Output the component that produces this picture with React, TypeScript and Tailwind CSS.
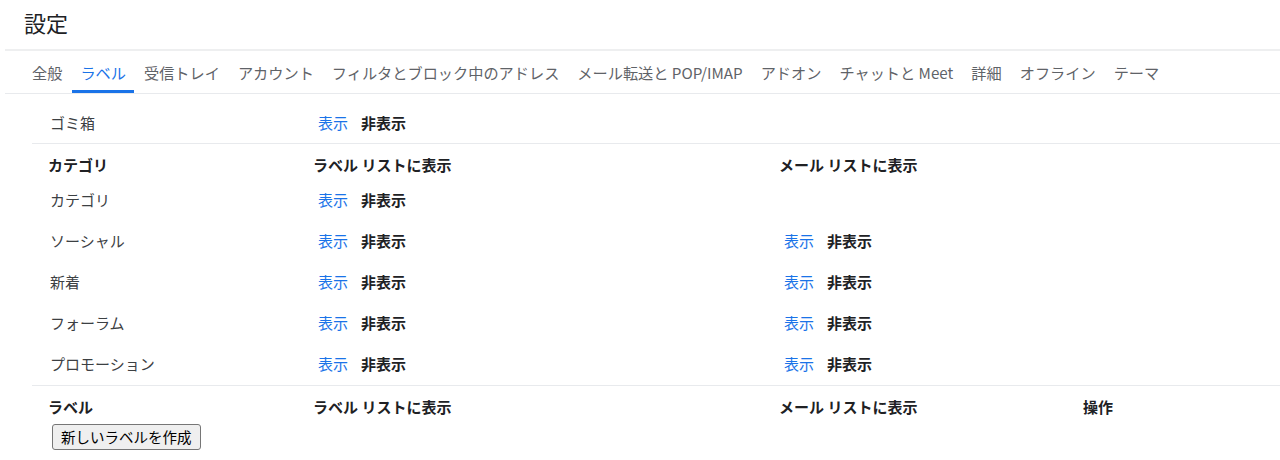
const font = { fontFamily: '"Noto Sans CJK JP", "Noto Sans", sans-serif' };

const tabs = [
  "全般",
  "ラベル",
  "受信トレイ",
  "アカウント",
  "フィルタとブロック中のアドレス",
  "メール転送と POP/IMAP",
  "アドオン",
  "チャットと Meet",
  "詳細",
  "オフライン",
  "テーマ",
];

const categories = ["ソーシャル", "新着", "フォーラム", "プロモーション"];

function ShowHide() {
  return (
    <div className="flex items-center gap-[13px] pl-[5px]">
      <span className="text-[#1a73e8] cursor-pointer">表示</span>
      <span className="font-bold text-[#202124]">非表示</span>
    </div>
  );
}

function HeadRow({ first, withAction }: { first: string; withAction?: boolean }) {
  return (
    <div className="grid grid-cols-[281px_466px_304px_1fr] h-[36px] pt-[6px] items-center font-bold text-[#202124] text-[15px]">
      <div className="pl-4">{first}</div>
      <div>ラベル リストに表示</div>
      <div>メール リストに表示</div>
      <div>{withAction ? "操作" : ""}</div>
    </div>
  );
}

export default function App() {
  return (
    <div className="w-[1280px] h-[460px] bg-white overflow-hidden text-[15px] text-[#202124]" style={font}>
      {/* Header */}
      <div className="h-[49px] flex items-center pl-6 pb-[6px]">
        <h1 className="text-[22px] font-normal text-[#202124] leading-none">設定</h1>
      </div>
      <div className="ml-[5px] h-[2px] bg-[#eeeff0]" />

      {/* Tabs */}
      <div className="ml-[5px] flex items-stretch h-[43px] border-b border-[#e8eaed] pl-[19px] gap-[2px] text-[15.2px]">
        {tabs.map((t) => (
          <div
            key={t}
            className={
              t === "ラベル"
                ? "px-2 flex items-center text-[#1a73e8] border-b-[3px] border-[#1a73e8] pt-[3px]"
                : "px-2 flex items-center text-[#5f6368] border-b-[3px] border-transparent pt-[3px]"
            }
          >
            {t}
          </div>
        ))}
      </div>

      {/* Content */}
      <div className="pl-8">
        <div className="grid grid-cols-[281px_466px_304px_1fr] h-[50px] pt-[9px] items-center border-b border-[#e8eaed]">
          <div className="pl-[18px] text-[#3c4043]">ゴミ箱</div>
          <ShowHide />
          <div />
          <div />
        </div>

        <HeadRow first="カテゴリ" />

        <div className="grid grid-cols-[281px_466px_304px_1fr] h-[41px] items-center">
          <div className="pl-[18px] text-[#3c4043]">カテゴリ</div>
          <ShowHide />
          <div />
          <div />
        </div>

        {categories.map((c) => (
          <div key={c} className="grid grid-cols-[281px_466px_304px_1fr] h-[41px] items-center">
            <div className="pl-[18px] text-[#3c4043]">{c}</div>
            <ShowHide />
            <ShowHide />
            <div />
          </div>
        ))}

        <div className="h-[1px] bg-[#e8eaed]" />

        <HeadRow first="ラベル" withAction />
        <div className="pl-5 mt-[2px]">
          <button className="h-[26px] px-[8px] bg-[#efefef] border border-[#767676] rounded-[3px] text-[14.5px] text-black leading-none">
            新しいラベルを作成
          </button>
        </div>
      </div>
    </div>
  );
}
